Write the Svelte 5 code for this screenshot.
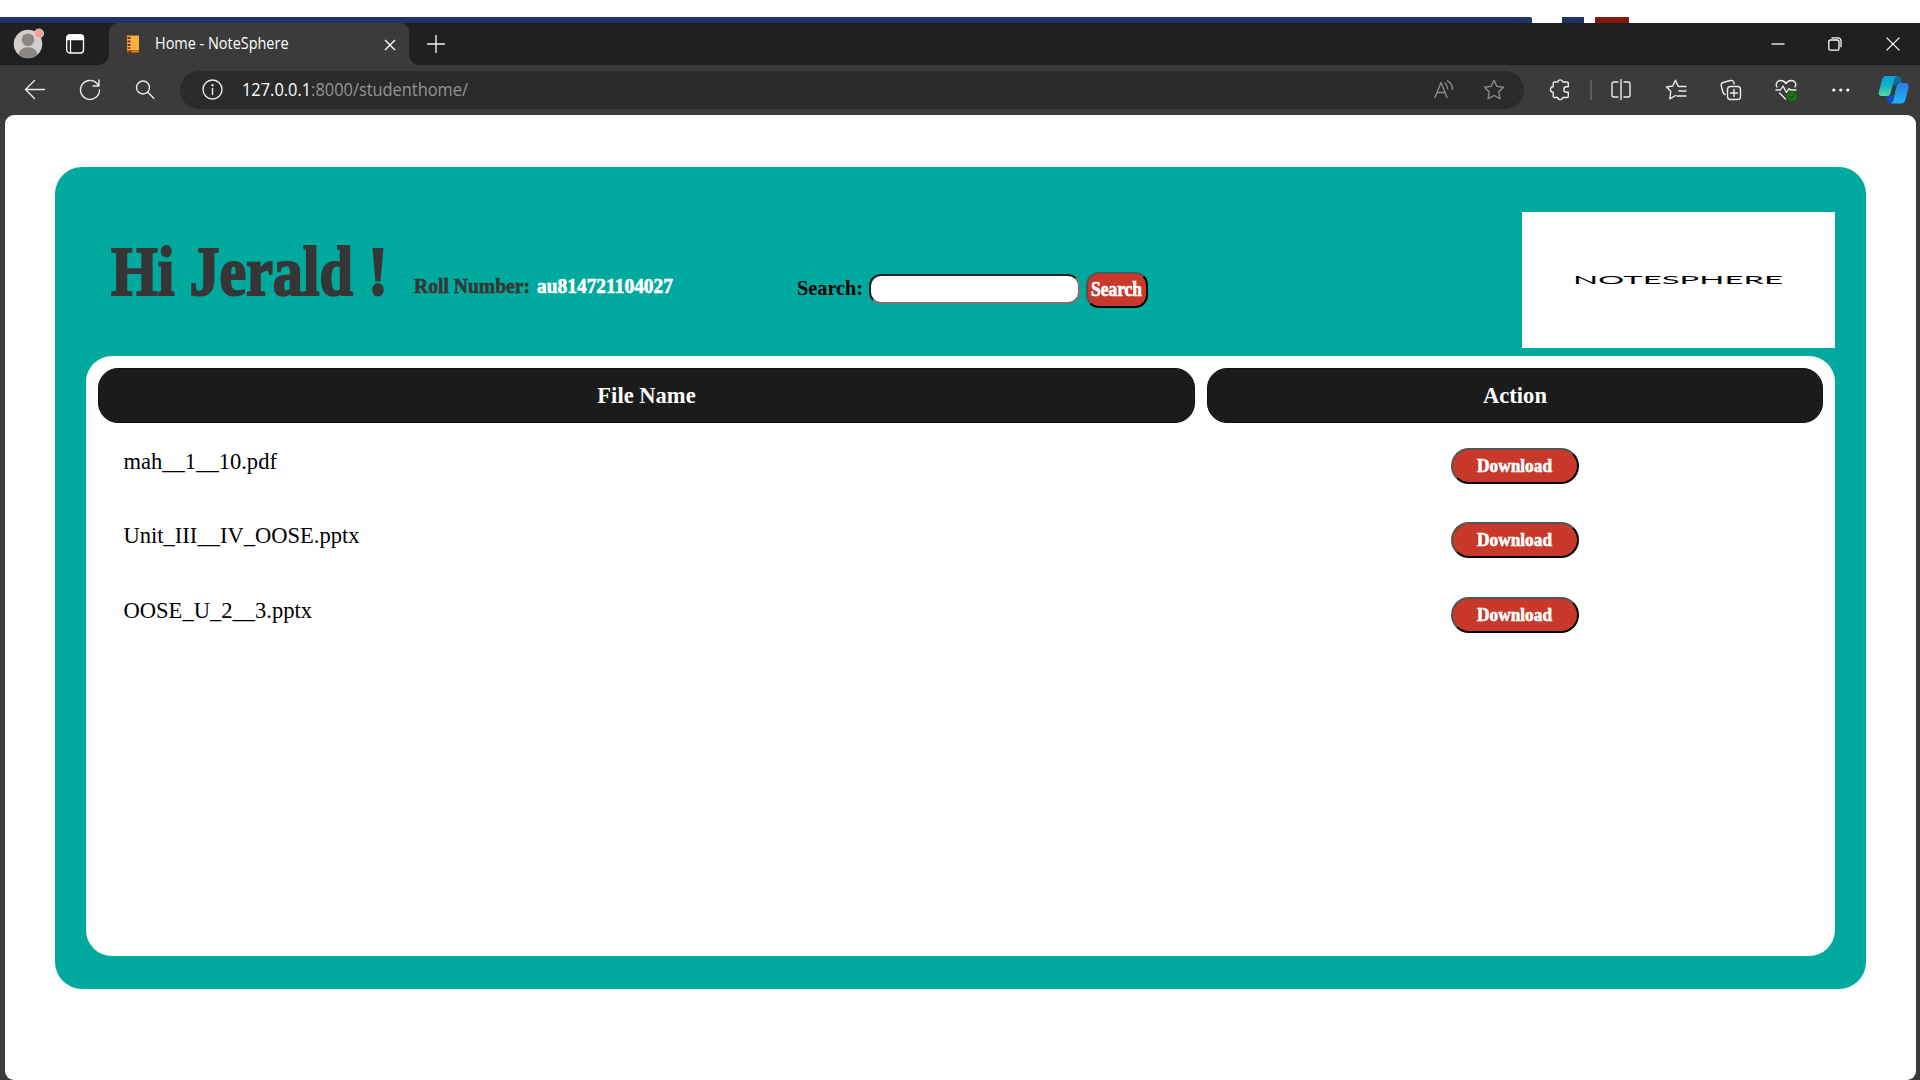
<script>
  const files = ['mah__1__10.pdf', 'Unit_III__IV_OOSE.pptx', 'OOSE_U_2__3.pptx'];
</script>

{#snippet fit(text, width, height, size, baseline, cls, squeeze = 1)}
  <svg class="fit {cls}" {width} {height} font-size={size}>
    <text x="0" y={baseline} transform="scale({squeeze} 1)" textLength={width / squeeze} lengthAdjust="spacingAndGlyphs">{text}</text>
  </svg>
{/snippet}

<div class="screen">
  <div class="strip">
    <i class="blue long"></i><i class="blue short"></i><i class="red"></i>
  </div>

  <div class="tabs">
    <svg class="avatar" width="32" height="34" viewBox="0 0 32 34">
      <circle cx="15" cy="18" r="14.3" fill="#d0cdca" />
      <circle cx="15" cy="13.8" r="6.3" fill="#8b8683" />
      <path d="M5.5 28.5c1-5 4.500-7.300 9.500-7.300s8.500 2.300 9.500 7.300a14.300 14.300 0 0 1-19 0z" fill="#8b8683" />
      <circle cx="26" cy="7.500" r="4.500" fill="#f79b94" stroke="#dcd8d4" stroke-width="1" />
    </svg>
    <svg class="workspace" width="20" height="20" viewBox="0 0 20 20" fill="none" stroke="#fff" stroke-width="1.300">
      <rect x="1.700" y="1" width="16.800" height="18" rx="3" />
      <path d="M2 5V4a3 3 0 0 1 3-3h10.500a3 3 0 0 1 3 3v1.500H2z" fill="#fff" />
      <path d="M5.500 6v13" />
    </svg>
    <div class="tab">
      <svg width="16" height="21" viewBox="0 0 16 21">
        <path d="M1 1h12v17H2.500L1 16.500z" fill="#ffae42" />
        <path d="M1 1h12v.8H1zM1 16h12v.8H1z" fill="#8a4a12" />
        <path d="M1 17h12v1.500H2z" fill="#e08b1c" />
        <path d="M1.500 3h3v2h-3zM1.500 6.500h3v2h-3zM1.500 10h3v2h-3zM1.500 13.200h3v1.500h-3z" fill="#6d3410" />
        <path d="M2.300 17h3v3.500l-1.500-.8-1.500.8z" fill="#8d2b20" />
      </svg>
      {@render fit('Home - NoteSphere', 133.5, 24, 15.5, 17, 'title')}
      <svg class="close" width="12" height="12" viewBox="0 0 12 12" stroke="#fff" stroke-width="1.400"><path d="M1 1l10 10M11 1L1 11" /></svg>
    </div>
    <svg class="plus" width="18" height="18" viewBox="0 0 18 18" stroke="#eee" stroke-width="1.400"><path d="M9 0v18M0 9h18" /></svg>
    <div class="win">
      <svg width="14" height="14" stroke="#fff" stroke-width="1.300"><path d="M.5 7h13" /></svg>
      <svg width="14" height="14" fill="none" stroke="#fff" stroke-width="1.300"><rect x=".8" y="3" width="10.200" height="10.200" rx="1.500" /><path d="M3.500.8h6.500a3 3 0 0 1 3 3v6.500" /></svg>
      <svg width="14" height="14" stroke="#fff" stroke-width="1.300"><path d="M.6.600l12.800 12.800M13.400.600L.6 13.400" /></svg>
    </div>
  </div>

  <div class="tools">
    <div class="cell"><svg width="22" height="22" viewBox="0 0 22 22"><path d="M20.500 10.500H1.500M10.500 1.500l-9 9 9 9" /></svg></div>
    <div class="cell"><svg width="22" height="22" viewBox="0 0 22 22"><path d="M20.500 11a9.500 9.500 0 1 1-2.500-6.500l1.500 2M20 1v6h-6" /></svg></div>
    <div class="cell"><svg width="20" height="20" viewBox="0 0 20 20"><circle cx="8" cy="7.500" r="6.500" /><path d="M12.800 12.300l6 6" /></svg></div>
    <div class="address">
      <svg class="info" width="22" height="22" viewBox="0 0 22 22"><circle cx="10.500" cy="10.500" r="9.500" /><path d="M10.500 9.500v6" /><circle cx="10.500" cy="6.300" r=".5" /></svg>
      <svg class="fit url" width="226" height="28" font-size="18">
        <text x="0" y="20" textLength="226" lengthAdjust="spacingAndGlyphs"><tspan class="host">127.0.0.1</tspan>:8000/studenthome/</text>
      </svg>
      <svg class="read dim" width="20" height="20" viewBox="0 0 20 20"><path d="M1 17.500L7 2.500 13 17.500M3.200 12.500h7.700M11 3c1.800 1.500 2.500 3.200 2.500 5.500M13.500.8c3.500 2 5 5 5 8.700" /></svg>
      <svg class="dim" width="22" height="22" viewBox="0 0 22 22"><path d="M11 1.300l2.900 6.100 6.600.9-4.800 4.700 1.200 6.700-5.900-3.200-5.900 3.200 1.200-6.700L1.500 8.300l6.600-.9z" /></svg>
    </div>
    <div class="cell"><svg width="22" height="22" viewBox="0 0 22 22"><path d="M5.500 3h3.200a2.600 2.600 0 0 1 5.100 0H18a1.300 1.300 0 0 1 1.300 1.300v3.500h-1.800a2.700 2.700 0 0 0 0 5.400h1.800v4a1.300 1.300 0 0 1-1.300 1.300h-4.200a2.600 2.600 0 0 1-5.100 0H5.500a1.300 1.300 0 0 1-1.300-1.300v-4a2.700 2.700 0 0 1 0-5.400V4.300A1.300 1.300 0 0 1 5.500 3z" /></svg></div>
    <i class="sep"></i>
    <div class="cell"><svg width="20" height="22" viewBox="0 0 20 22"><path d="M7 3H3a2 2 0 0 0-2 2v11a2 2 0 0 0 2 2h4M13 3h4a2 2 0 0 1 2 2v11a2 2 0 0 1-2 2h-4M10 .5v20" /></svg></div>
    <div class="cell"><svg width="22" height="22" viewBox="0 0 22 22"><path d="M14 7.500L13 7 10.500 1.200 7.800 7 1.500 8l4.300 4.500-1 7.300 5.700-3.300M14 7.500h7M14 12h7M12 17h9" /></svg></div>
    <div class="cell"><svg width="22" height="22" viewBox="0 0 22 22"><rect x="7.500" y="7.500" width="13" height="13" rx="3" /><path d="M14 10.500v7M10.500 14h7M5 15.500C3.500 15 3 14 2.700 12.500L1.200 6.500C1 5 1.500 4 3 3.500l7.500-2c1.500-.3 2.700.3 3.200 1.700l.5 1.500" /></svg></div>
    <div class="cell"><svg width="24" height="24" viewBox="0 0 24 24"><path d="M3 9C1 5.500 3.500 2.500 6.700 2.500c2.500 0 4.300 1.500 5.300 3 1-1.500 2.800-3 5.300-3C20.500 2.500 23 5.500 21 9M2 12h4.500l2.500-4 3.500 6.500 2.500-4 1.500 1.500H22M5.500 15l6 6" /><circle cx="18" cy="18.500" r="4.700" fill="#107c10" stroke="none" /><path d="M16 18.500l1.500 1.500 2.700-3" stroke="#0a3d0a" stroke-width="1" /></svg></div>
    <div class="cell"><svg width="18" height="6" viewBox="0 0 18 6"><g fill="#fff" stroke="none"><circle cx="1.800" cy="3" r="1.600" /><circle cx="8.800" cy="3" r="1.600" /><circle cx="15.800" cy="3" r="1.600" /></g></svg></div>
    <svg class="copilot" width="32" height="30" viewBox="0 0 32 30">
      <defs>
        <linearGradient id="ca" x1="0" y1="0" x2="0" y2="1"><stop offset="0" stop-color="#0c9fd8" /><stop offset=".5" stop-color="#13b5c8" /><stop offset="1" stop-color="#4fdc98" /></linearGradient>
        <linearGradient id="cb" x1="0" y1="0" x2="0" y2="1"><stop offset="0" stop-color="#2b7ce0" /><stop offset="1" stop-color="#17b8f8" /></linearGradient>
      </defs>
      <g stroke="none">
        <path d="M15 1h4c2.500 0 3.500 1 4 3l1.400 4h-5l-4.400 4z" fill="#0d6b9c" />
        <path d="M8 20h8l-2 8.500c-3 0-4-.8-4.500-2.500z" fill="#1546d6" />
        <path d="M8 1h11c-2 .5-2.500 2-3 4l-3.500 13c-.6 2.200-1.500 3-3.500 3H4c-2.500 0-3.800-1.500-3-4.500L4 5c.8-2.700 2-4 4-4z" fill="url(#ca)" />
        <path d="M22 8h5c3 0 4.200 2 3.500 4.500l-3 12c-.8 2.800-2.200 4-4.500 4H12.500c2-.5 2.500-2 3-4L18.500 11.500C19.200 9 20 8 22 8z" fill="url(#cb)" />
      </g>
    </svg>
  </div>

  <div class="view">
    <div class="page">
      <main>
        <header>
          {@render fit('Hi Jerald !', 277, 80, 69.5, 58.5, 'hello', 0.862)}
          {@render fit('Roll Number:', 116, 30, 22, 21.500, 'roll', 0.89)}
          {@render fit('au814721104027', 136, 30, 22, 21.500, 'num', 0.87)}
          {@render fit('Search:', 66, 30, 21, 22.500, 'label', 0.96)}
          <input aria-label="Search" />
          <button class="go">{@render fit('Search', 51, 24, 20, 18, 'white', 0.87)}</button>
          <div class="logo">{@render fit('NOTESPHERE', 210, 14, 12, 10, 'brand')}</div>
        </header>
        <section class="panel">
          <div class="row head"><div>File Name</div><div>Action</div></div>
          {#each files as file}
            <div class="row">
              <div class="name">{file}</div>
              <div class="action"><button>{@render fit('Download', 75, 24, 18.5, 18, 'white', 0.935)}</button></div>
            </div>
          {/each}
        </section>
      </main>
    </div>
  </div>
</div>

<style>
  :global(body) { margin: 0; background: #fff; overflow: hidden; }
  * { box-sizing: border-box; }
  .screen { width: 1920px; height: 1080px; overflow: hidden; display: flex; flex-direction: column; background: #fff; font-family: "Liberation Serif", serif; }
  svg { display: block; flex: none; }
  .fit { overflow: visible; font-weight: bold; fill: #000; }
  .strip { height: 23px; padding-top: 17px; display: flex; flex: none; }
  .blue { background: #203367; }
  .long { width: 1532px; border-top-right-radius: 2px; }
  .short { width: 22px; margin: 0 11px 0 30px; }
  .red { width: 34px; background: #84190f; }

  .tabs { height: 42px; flex: none; background: #202020; display: flex; align-items: center; }
  .avatar { margin-left: 13px; align-self: flex-start; margin-top: 3px; }
  .workspace { margin-left: 20px; }
  .tab { position: relative; width: 300px; height: 42px; margin-left: 24px; padding-left: 17px; border-radius: 9px 9px 0 0; background: #3b3b3b; display: flex; align-items: center; }
  .tab::before, .tab::after { content: ""; position: absolute; bottom: 0; width: 10px; height: 10px; }
  .tab::before { left: -10px; background: radial-gradient(circle at 0 0, #202020 9.5px, #3b3b3b 10px); }
  .tab::after { right: -10px; background: radial-gradient(circle at 100% 0, #202020 9.5px, #3b3b3b 10px); }
  .fit.title { margin-left: 13px; font-family: "Open Sans", "Noto Sans", sans-serif; font-weight: 400; fill: #fff; }
  .close { margin: 1px 13.5px 0 auto; }
  .plus { margin: 0 0 1px 18px; }
  .win { margin: 0 20.5px 1px auto; display: flex; gap: 43.5px; }

  .tools { height: 50px; flex: none; padding-left: 7.5px; background: #3b3b3b; display: flex; align-items: center; }
  .tools svg:not(.fit) { fill: none; stroke: #ececec; stroke-width: 1.4; stroke-linejoin: round; stroke-linecap: round; }
  .cell { width: 55px; flex: none; display: flex; justify-content: center; }
  .address { width: 1344px; height: 38px; margin: 0 8.5px 0 7.5px; padding: 0 19.5px 0 22px; border-radius: 19px; background: #2b2b2b; display: flex; align-items: center; flex: none; }
  .fit.url { margin-left: 18px; font-family: "Open Sans", "Noto Sans", sans-serif; font-weight: 400; fill: #949494; }
  .host { fill: #fff; }
  .tools svg.dim { stroke: #8b8b8b; }
  .read { margin: 0 28.5px 0 auto; }
  .sep { width: 2px; height: 20px; margin: 0 2px 0 2px; background: #5c5c5c; }
  .copilot { margin-left: 9.5px; }

  .view { flex: 1; padding: 0 4px 0 5px; background: #3b3b3b; }
  .page { height: 965px; border-radius: 9px; background: #fff; padding: 52px 50px 0; }
  main { height: 822px; border-radius: 27px; background: #00a99d; display: flex; flex-direction: column; }
  header { height: 189px; flex: none; padding-left: 56px; display: flex; align-items: flex-start; }
  .hello { margin-top: 69px; }
  .fit.hello { fill: #363636; stroke: #363636; stroke-width: 2.2px; }
  .roll, .num { margin-top: 104.5px; }
  .fit.roll { fill: #363636; stroke: #363636; stroke-width: .6px; margin-left: 26px; }
  .fit.num, .fit.white { fill: #fff; stroke: #fff; stroke-width: .6px; }
  .num { margin-left: 7px; }
  .label { margin: 106px 0 0 124px; }
  input { width: 211px; height: 30px; margin: 107px 0 0 6px; border: 2px inset #767676; border-radius: 12px; background: #fff; padding: 0; }
  button { display: flex; align-items: center; justify-content: center; border: 2px outset #000; background: #c8392b; padding: 0 1px 0 0; font-family: inherit; }
  .go { width: 62px; height: 36px; margin: 105px 0 0 6px; border-radius: 13px; }
  .logo { width: 313px; height: 135.5px; margin: 45px 31px 0 auto; background: #fff; display: flex; padding: 62px 0 0 51px; }
  .fit.brand { font-family: Lato, sans-serif; font-weight: 400; }

  .panel { height: 600px; flex: none; margin: 0 31px; border-radius: 26px; background: #fff; padding: 12px; }
  .row { display: grid; grid-template-columns: 1097px 616px; column-gap: 12px; height: 74.7px; font-size: 22.55px; }
  .head { height: 53.5px; margin-bottom: 2px; font-weight: bold; color: #fff; text-align: center; }
  .head div { background: #1b1b1b; border-radius: 20px; border: 1px solid #111; line-height: 53px; }
  .name { padding: 25px 0 0 25.5px; line-height: 26px; }
  .action { display: flex; justify-content: center; padding-top: 24px; }
  .action button { width: 128px; height: 36px; border-radius: 18px; }
</style>
